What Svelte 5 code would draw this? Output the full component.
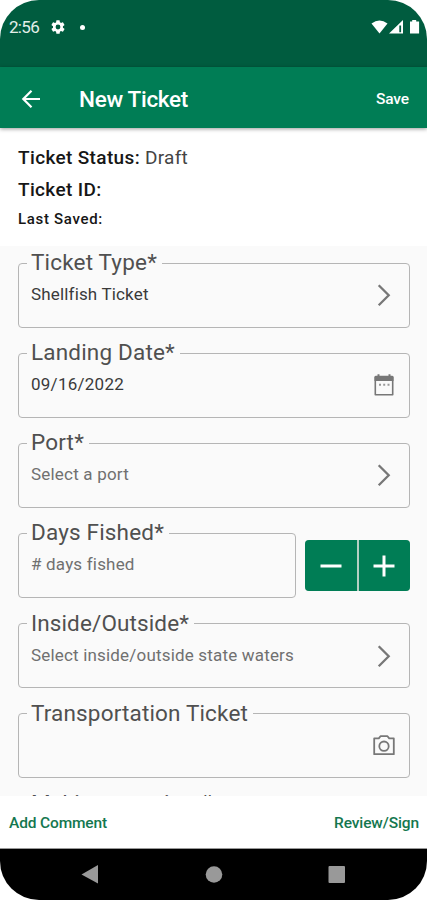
<script>
  const fields = [
    { label: 'Ticket Type*', w: 126, value: 'Shellfish Ticket', vw: 117, filled: true, icon: 'chevron' },
    { label: 'Landing Date*', w: 144, value: '09/16/2022', vw: 93, filled: true, icon: 'calendar' },
    { label: 'Port*', w: 53, value: 'Select a port', vw: 98, icon: 'chevron' },
    { label: 'Days Fished*', w: 133, value: '# days fished', vw: 103, icon: 'stepper' },
    { label: 'Inside/Outside*', w: 158, value: 'Select inside/outside state waters', vw: 263, icon: 'chevron' },
    { label: 'Transportation Ticket', w: 217, value: '', vw: 0, icon: 'camera' },
    { label: 'Multi-transaction #', w: 181, value: '', vw: 0, icon: 'none' }
  ];
  let days = $state(null);

  // Spreads the letters of a text line over a fixed width.
  function fit(node, width) {
    if (!width) return;
    const range = document.createRange();
    range.selectNodeContents(node);
    const natural = range.getBoundingClientRect().width;
    node.style.letterSpacing = (width - natural) / node.textContent.length + 'px';
  }
</script>

<div class="phone">
  <div class="status">
    <span class="clock"><span use:fit={30}>2:56</span></span>
    <svg class="gear" width="16" height="16" viewBox="0 0 24 24"><path fill="#fff" fill-rule="evenodd" d="M19.4 13a7.500 7.500 0 0 0 0-2l2.100-1.650a.5.5 0 0 0 .12-.64l-2-3.460a.5.5 0 0 0-.61-.22l-2.490 1a7.300 7.300 0 0 0-1.690-.98l-.38-2.650A.49.49 0 0 0 14 2h-4a.49.49 0 0 0-.49.42l-.38 2.650c-.61.25-1.170.58-1.690.98l-2.490-1a.5.5 0 0 0-.61.22l-2 3.460a.49.49 0 0 0 .12.64L4.570 11a7.900 7.900 0 0 0 0 2l-2.110 1.650a.5.5 0 0 0-.12.64l2 3.460c.12.22.39.3.61.22l2.490-1c.52.4 1.080.73 1.690.98l.38 2.650c.03.24.24.42.49.42h4c.25 0 .46-.18.49-.42l.38-2.650c.61-.25 1.170-.59 1.690-.98l2.490 1c.23.09.49 0 .61-.22l2-3.460a.5.5 0 0 0-.12-.64zM12 15.600a3.600 3.600 0 1 1 0-7.200 3.600 3.600 0 0 1 0 7.200z"/></svg>
    <i class="dot"></i>
    <svg class="signals" width="50" height="16" viewBox="0 0 50 16" fill="#fff">
      <path d="M0.500 4.500Q8.500-1.500 16.500 4.500L8.500 14.500z"/>
      <path fill-rule="evenodd" d="M18 14.500L32 1v13.500zM28.300 6.500v6.800h1.800V6.500z"/>
      <path d="M39 2.500h2.200V1h4v1.500h2.900v12H39z"/>
    </svg>
  </div>

  <header>
    <svg class="back" width="20" height="20" viewBox="0 0 20 20" fill="none" stroke="#fff" stroke-width="2.200"><path d="M19 10H2.500M10.500 1.800L2.300 10l8.200 8.200"/></svg>
    <h1><span use:fit={109}>New Ticket</span></h1>
    <button class="save"><span use:fit={33}>Save</span></button>
  </header>

  <section class="summary">
    <p><b use:fit={122}>Ticket Status:</b><span class="draft" use:fit={43}>Draft</span></p>
    <p><b use:fit={83.5}>Ticket ID:</b></p>
    <p class="small"><b use:fit={85}>Last Saved:</b></p>
  </section>

  <main>
    {#each fields as f}
      <div class="row">
        <fieldset>
          <legend><span use:fit={f.w}>{f.label}</span></legend>
          <div class="inner">
            <span class="value" class:filled={f.filled}><span use:fit={f.vw}>{f.icon === 'stepper' && days !== null ? days : f.value}</span></span>
            {#if f.icon === 'chevron'}
              <svg width="24" height="24" viewBox="0 0 24 24" fill="none" stroke="#777" stroke-width="2.300"><path d="M6.700 2.300L16.700 12.300L6.700 22.300"/></svg>
            {:else if f.icon === 'calendar'}
              <svg width="24" height="24" viewBox="0 0 24 24"><path fill="none" stroke="#777" stroke-width="1.600" d="M3.300 4.300h17.400v17.500H3.300z" stroke-linejoin="round"/><path fill="#777" d="M2.500 4q0-1.300 1.500-1.300h1.500V1.200h2v1.500h9V1.200h2v1.500H20q1.500 0 1.500 1.300v4h-19z"/><path fill="#999" d="M7 10.700h2v2H7zm4.200 0h2v2h-2zm4.300 0h2v2h-2z"/></svg>
            {:else if f.icon === 'camera'}
              <svg width="24" height="24" viewBox="0 0 24 24" fill="none" stroke="#777" stroke-width="1.800" stroke-linejoin="round"><path d="M2.200 4.400h4.600L8.500 2.200h7l1.700 2.200h4.600v15.800H2.200z"/><circle cx="12" cy="12.200" r="4.700"/></svg>
            {/if}
          </div>
        </fieldset>
        {#if f.icon === 'stepper'}
          <div class="stepper">
            <button aria-label="Decrease" onclick={() => (days = Math.max(0, (days ?? 0) - 1))}><svg width="22" height="22" viewBox="0 0 22 22"><path d="M0.500 11h21" stroke="#fff" stroke-width="3"/></svg></button>
            <button aria-label="Increase" onclick={() => (days = (days ?? 0) + 1)}><svg width="22" height="22" viewBox="0 0 22 22"><path d="M0.500 11h21M11 0.500v21" stroke="#fff" stroke-width="3"/></svg></button>
          </div>
        {/if}
      </div>
    {/each}
  </main>

  <footer>
    <button><span use:fit={98}>Add Comment</span></button>
    <button><span use:fit={85}>Review/Sign</span></button>
  </footer>

  <nav>
    <svg width="427" height="51" viewBox="0 0 427 51" fill="#999"><path d="M81.500 25.500L98 16v18.500z"/><circle cx="214" cy="25.500" r="8.300"/><rect x="328.500" y="17" width="16.500" height="17" rx="1"/></svg>
  </nav>
</div>

<style>
  :global(body) { background: #fff; }
  .phone { width: 427px; height: 900px; display: flex; flex-direction: column; overflow: hidden; border-radius: 39px; background: #fff; font-family: Roboto, "Liberation Sans", sans-serif; white-space: nowrap; }
  button { border: 0; padding: 0; background: none; font: inherit; color: inherit; white-space: nowrap; }
  .status { flex: none; height: 67px; box-sizing: border-box; padding: 18px 7px 0 9px; display: flex; align-items: flex-start; background: #005c3f; color: #e3efe9; }
  .clock { width: 41px; font-size: 17px; line-height: 19px; }
  .gear { margin-top: 1px; }
  .dot { width: 5px; height: 5px; margin: 7px 0 0 14px; border-radius: 50%; background: #fff; }
  .signals { margin: 1px -1px 0 auto; }
  header { flex: none; height: 61px; box-sizing: border-box; display: flex; align-items: center; padding: 2px 18px 0 21px; background: #007d55; color: #fff; box-shadow: 0 1px 4px rgba(0, 0, 0, .4); z-index: 1; }
  h1 { margin: 0 auto 0 38px; font-size: 22.500px; font-weight: 500; }
  .save { font-size: 15.500px; font-weight: 500; }
  .summary { flex: none; height: 118px; box-sizing: border-box; padding: 14px 18px 0; color: #161616; font-size: 19px; }
  p { margin: 0; height: 31.500px; line-height: 31px; display: flex; }
  b { font-weight: 500; }
  .draft { margin-left: 5px; color: #444; font-weight: 400; }
  .small { font-size: 15px; line-height: 29px; }
  main { flex: 1; min-height: 0; box-sizing: border-box; padding: 5px 17.500px 0 18px; background: #fafafa; overflow: hidden; }
  .row { display: flex; height: 90.150px; }
  fieldset { flex: 1; min-width: 0; height: 76.500px; box-sizing: border-box; margin: 0; padding: 0 13px 0 8px; border: 1.500px solid #b5b5b5; border-radius: 4px; }
  legend { height: 24px; line-height: 23px; padding: 0 5px 0 4px; font-size: 22.500px; font-weight: 400; color: #505050; }
  .inner { display: flex; justify-content: space-between; padding-left: 4px; height: 40px; }
  .inner svg { margin-top: 8px; flex: none; }
  .value { font-size: 17px; line-height: 20px; margin-top: 9px; color: #707070; }
  .value.filled { color: #3a3a3a; }
  .stepper { flex: none; display: flex; gap: 2px; width: 105px; height: 51.500px; margin: 18.500px 0 0 9px; border-radius: 4px; overflow: hidden; background: #b5cfc3; }
  .stepper button { flex: 1; display: grid; place-items: center; background: #007d55; }
  .stepper button:first-child { flex: none; width: 52px; }
  footer { flex: none; height: 53px; box-sizing: border-box; display: flex; justify-content: space-between; align-items: center; padding: 1px 8px 0 9px; background: #fff; border-bottom: 1px solid #999; color: #14774f; font-size: 15.500px; font-weight: 500; }
  nav { flex: none; height: 51px; background: #000; }
  nav svg { display: block; }
</style>
